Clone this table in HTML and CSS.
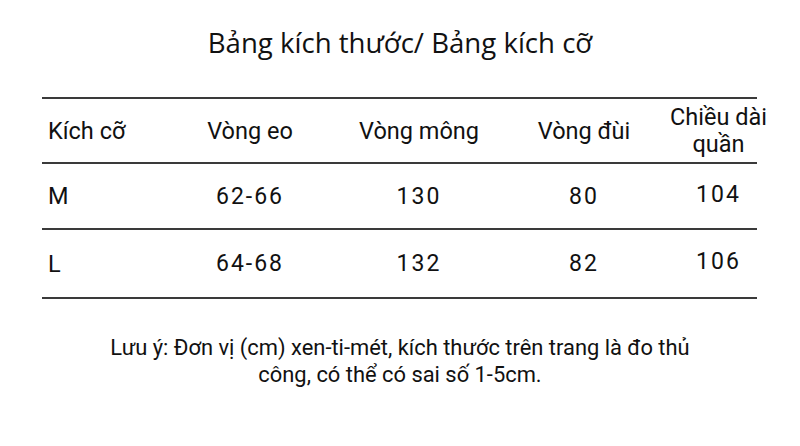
FILE: index.html
```html
<!DOCTYPE html>
<html lang="vi">
<head>
<meta charset="utf-8">
<link rel="stylesheet" href="styles.css">
</head>
<body>
<div class="page">
  <h1 class="title">Bảng kích thước/ Bảng kích cỡ</h1>
  <div class="table">
    <div class="row head">
      <div class="cell first">Kích cỡ</div>
      <div class="cell">Vòng eo</div>
      <div class="cell">Vòng mông</div>
      <div class="cell">Vòng đùi</div>
      <div class="cell last"><span class="two">Chiều dài<br>quần</span></div>
    </div>
    <div class="row data">
      <div class="cell first">M</div>
      <div class="cell num">62-66</div>
      <div class="cell num">130</div>
      <div class="cell num">80</div>
      <div class="cell num last up">104</div>
    </div>
    <div class="row data">
      <div class="cell first">L</div>
      <div class="cell num">64-68</div>
      <div class="cell num">132</div>
      <div class="cell num">82</div>
      <div class="cell num last up">106</div>
    </div>
  </div>
  <p class="note">Lưu ý: Đơn vị (cm) xen-ti-mét, kích thước trên trang là đo thủ công, có thể có sai số 1-5cm.</p>
</div>
</body>
</html>
```
FILE: styles.css
```css
html, body {
  margin: 0;
  padding: 0;
  background: #ffffff;
}
.page {
  width: 800px;
  height: 446px;
  overflow: hidden;
  color: #111111;
  font-family: Roboto, "Liberation Sans", sans-serif;
}
.title {
  margin: 24px 0 0 0;
  font-family: "Open Sans", "Noto Sans", sans-serif;
  font-weight: 400;
  font-size: 27.6px;
  line-height: 36px;
  text-align: center;
}
.table {
  margin: 37px 0 0 42px;
  width: 715px;
  border-top: 2px solid #3a3a3a;
}
.row {
  display: grid;
  grid-template-columns: 118px 180px 158px 172px 87px;
  border-bottom: 2px solid #3a3a3a;
  align-items: center;
}
.head {
  height: 63px;
  font-size: 23.5px;
}
.data {
  height: 64px;
  font-size: 23.5px;
}
.data:last-child {
  height: 67px;
}
.cell {
  display: flex;
  justify-content: center;
  text-align: center;
  white-space: nowrap;
}
.two {
  display: block;
  line-height: 27px;
  text-align: center;
}
.first {
  justify-content: flex-start;
  padding-left: 6px;
}
.last {
  padding-left: 10px;
}
.num {
  font-size: 23px;
  letter-spacing: 2px;
}
.up {
  margin-top: -4px;
}
.note {
  width: 610px;
  margin: 35px auto 0 auto;
  font-size: 21.9px;
  line-height: 27px;
  text-align: center;
}
```
